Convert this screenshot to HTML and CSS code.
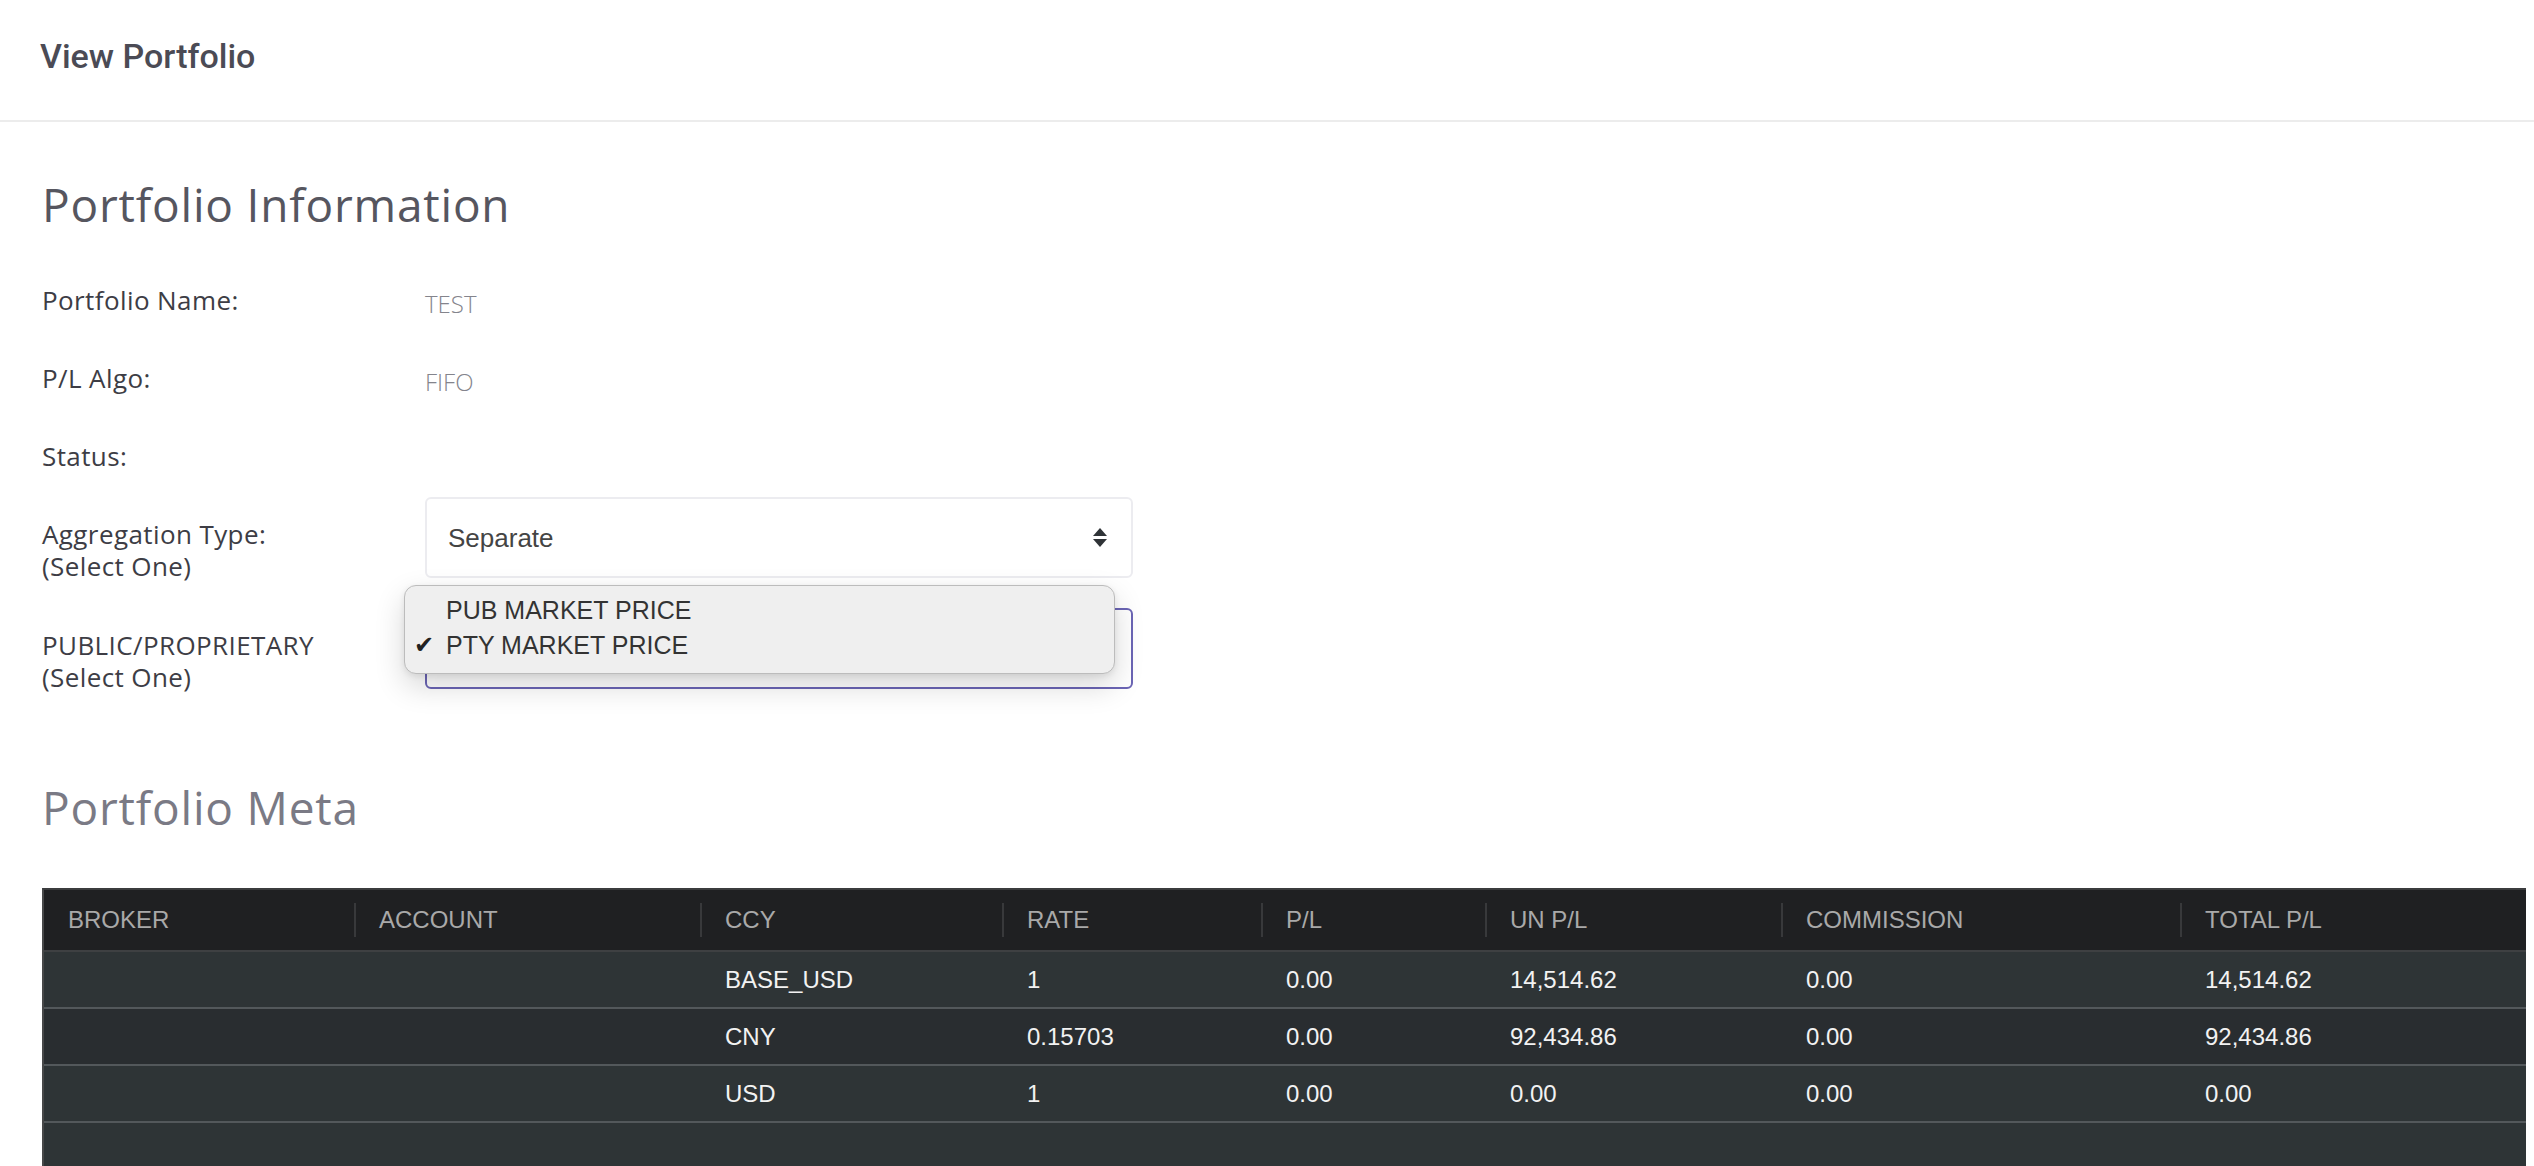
FILE: index.html
```html
<!DOCTYPE html>
<html lang="en">
<head>
	<meta charset="UTF-8">
	<title>View Portfolio</title>
	<link rel="stylesheet" href="styles.css">
</head>
<body>
    <header class="topbar">
        <h1 class="page-title">View Portfolio</h1>
    </header>

    <main class="page">
        <h2 class="section-title">Portfolio Information</h2>

        <div class="info-row">
            <div class="info-label">Portfolio Name:</div>
            <div class="info-value">TEST</div>
        </div>
        <div class="info-row">
            <div class="info-label">P/L Algo:</div>
            <div class="info-value">FIFO</div>
        </div>
        <div class="info-row info-row--compact">
            <div class="info-label">Status:</div>
            <div class="info-value"></div>
        </div>

        <div class="info-row info-row--select">
            <div class="info-label info-label--select">Aggregation Type:<br>(Select One)</div>
            <div class="select">
                <span class="select-text">Separate</span>
                <svg class="select-arrows" width="14" height="20" viewBox="0 0 14 20">
                    <polygon points="0,8 7,0 14,8" />
                    <polygon points="0,11 14,11 7,19" />
                </svg>
            </div>
        </div>

        <div class="info-row info-row--select">
            <div class="info-label info-label--select">PUBLIC/PROPRIETARY<br>(Select One)</div>
            <div class="select select--focus">
                <span class="select-text"></span>
                <svg class="select-arrows" width="14" height="20" viewBox="0 0 14 20">
                    <polygon points="0,8 7,0 14,8" />
                    <polygon points="0,11 14,11 7,19" />
                </svg>
                <!-- native option list, open -->
                <ul class="select-menu">
                    <li><span class="check"></span>PUB MARKET PRICE</li>
                    <li><span class="check">✔</span>PTY MARKET PRICE</li>
                </ul>
            </div>
        </div>

        <h2 class="section-title section-title--muted">Portfolio Meta</h2>

        <div class="table-wrap">
            <table class="meta-table">
                <colgroup>
                    <col style="width:310px">
                    <col style="width:346px">
                    <col style="width:302px">
                    <col style="width:259px">
                    <col style="width:224px">
                    <col style="width:296px">
                    <col style="width:399px">
                    <col>
                </colgroup>
                <thead>
                    <tr>
                        <th>BROKER</th>
                        <th>ACCOUNT</th>
                        <th>CCY</th>
                        <th>RATE</th>
                        <th>P/L</th>
                        <th>UN P/L</th>
                        <th>COMMISSION</th>
                        <th>TOTAL P/L</th>
                    </tr>
                </thead>
                <tbody>
                    <tr>
                        <td></td>
                        <td></td>
                        <td>BASE_USD</td>
                        <td>1</td>
                        <td>0.00</td>
                        <td>14,514.62</td>
                        <td>0.00</td>
                        <td>14,514.62</td>
                    </tr>
                    <tr>
                        <td></td>
                        <td></td>
                        <td>CNY</td>
                        <td>0.15703</td>
                        <td>0.00</td>
                        <td>92,434.86</td>
                        <td>0.00</td>
                        <td>92,434.86</td>
                    </tr>
                    <tr>
                        <td></td>
                        <td></td>
                        <td>USD</td>
                        <td>1</td>
                        <td>0.00</td>
                        <td>0.00</td>
                        <td>0.00</td>
                        <td>0.00</td>
                    </tr>
                </tbody>
            </table>
        </div>
    </main>
</body>
</html>
```

FILE: styles.css
```css
body {
    margin: 0;
    font-family: "Open Sans", "Liberation Sans", sans-serif;
    color: #3d3d45;
    background: #fff;
}

ul,
li {
    margin: 0;
    padding: 0;
    list-style: none;
}

.topbar {
    height: 40px;
    padding: 36px 40px 44px;
    border-bottom: 2px solid #ececec;
}

.page-title {
    margin: 0;
    font-family: Roboto, "Liberation Sans", sans-serif;
    font-size: 34px;
    font-weight: 500;
    line-height: 40px;
    color: #4b4b55;
}

.page {
    padding: 0 8px 0 42px;
}

.section-title {
    margin: 54px 0 52px;
    font-size: 46px;
    font-weight: 500;
    line-height: 56px;
    letter-spacing: 0.8px;
    color: #56565f;
}

.section-title--muted {
    margin: 86px 0 53px;
    color: #7a7a85;
}

/* info rows */
.info-row {
    display: flex;
    align-items: flex-start;
    margin-bottom: 42px;
    font-size: 26px;
    line-height: 32px;
    letter-spacing: 0.4px;
}

.info-row--compact {
    margin-bottom: 25px;
}

.info-row--select {
    margin-bottom: 26px;
}

.info-label {
    flex: none;
    width: 383px;
}

.info-label--select {
    padding-top: 21px;
}

.info-value {
    padding-top: 4px;
    font-size: 24px;
    font-weight: 300;
    letter-spacing: 0;
    color: #84848c;
}

/* select */
.select {
    position: relative;
    display: flex;
    align-items: center;
    justify-content: space-between;
    box-sizing: border-box;
    width: 708px;
    height: 81px;
    padding: 0 24px 0 21px;
    border: 2px solid #ececf0;
    border-radius: 6px;
    font-family: "Liberation Sans", Arial, sans-serif;
    font-size: 26px;
    letter-spacing: 0;
    color: #444;
}

.select--focus {
    border-color: #6b65b5;
}

.select-arrows {
    fill: #2f3337;
}

.select-menu {
    position: absolute;
    left: -23px;
    top: -25px;
    width: 709px;
    padding: 7px 0 10px;
    background: #efefef;
    border: 1px solid #bcbcbc;
    border-radius: 12px;
    box-shadow: 0 12px 30px rgba(0, 0, 0, .16), 0 2px 6px rgba(0, 0, 0, .08);
    font-family: "Liberation Sans", Arial, sans-serif;
    font-size: 25px;
    line-height: 35px;
    color: #333;
}

.select-menu>li {
    display: flex;
}

.check {
    width: 41px;
    padding-left: 9px;
    box-sizing: border-box;
    font-family: "DejaVu Sans", sans-serif;
    font-size: 24px;
    color: #222;
}

/* table */
.table-wrap {
    box-sizing: border-box;
    height: 284px;
    background: #2e3436;
    border-top: 2px solid #3b3c3e;
    border-left: 2px solid #474849;
}

.meta-table {
    width: 100%;
    table-layout: fixed;
    border-collapse: separate;
    border-spacing: 0;
    font-family: "Liberation Sans", Arial, sans-serif;
    font-size: 24px;
}

.meta-table th {
    height: 60px;
    padding: 0 24px;
    text-align: left;
    font-weight: normal;
    color: #a9a9a9;
    background: #1f2022;
    border-bottom: 2px solid #3e4042;
}

.meta-table th+th {
    padding-left: 25px;
    background: linear-gradient(#38393b, #38393b) left center / 2px 34px no-repeat, #1f2022;
}

.meta-table td {
    height: 55px;
    padding: 0 24px;
    color: #f2f2f2;
    border-bottom: 2px solid #53585b;
}

.meta-table td+td {
    padding-left: 25px;
}

.meta-table tbody tr:nth-child(even) td {
    background: #292d30;
}
```
